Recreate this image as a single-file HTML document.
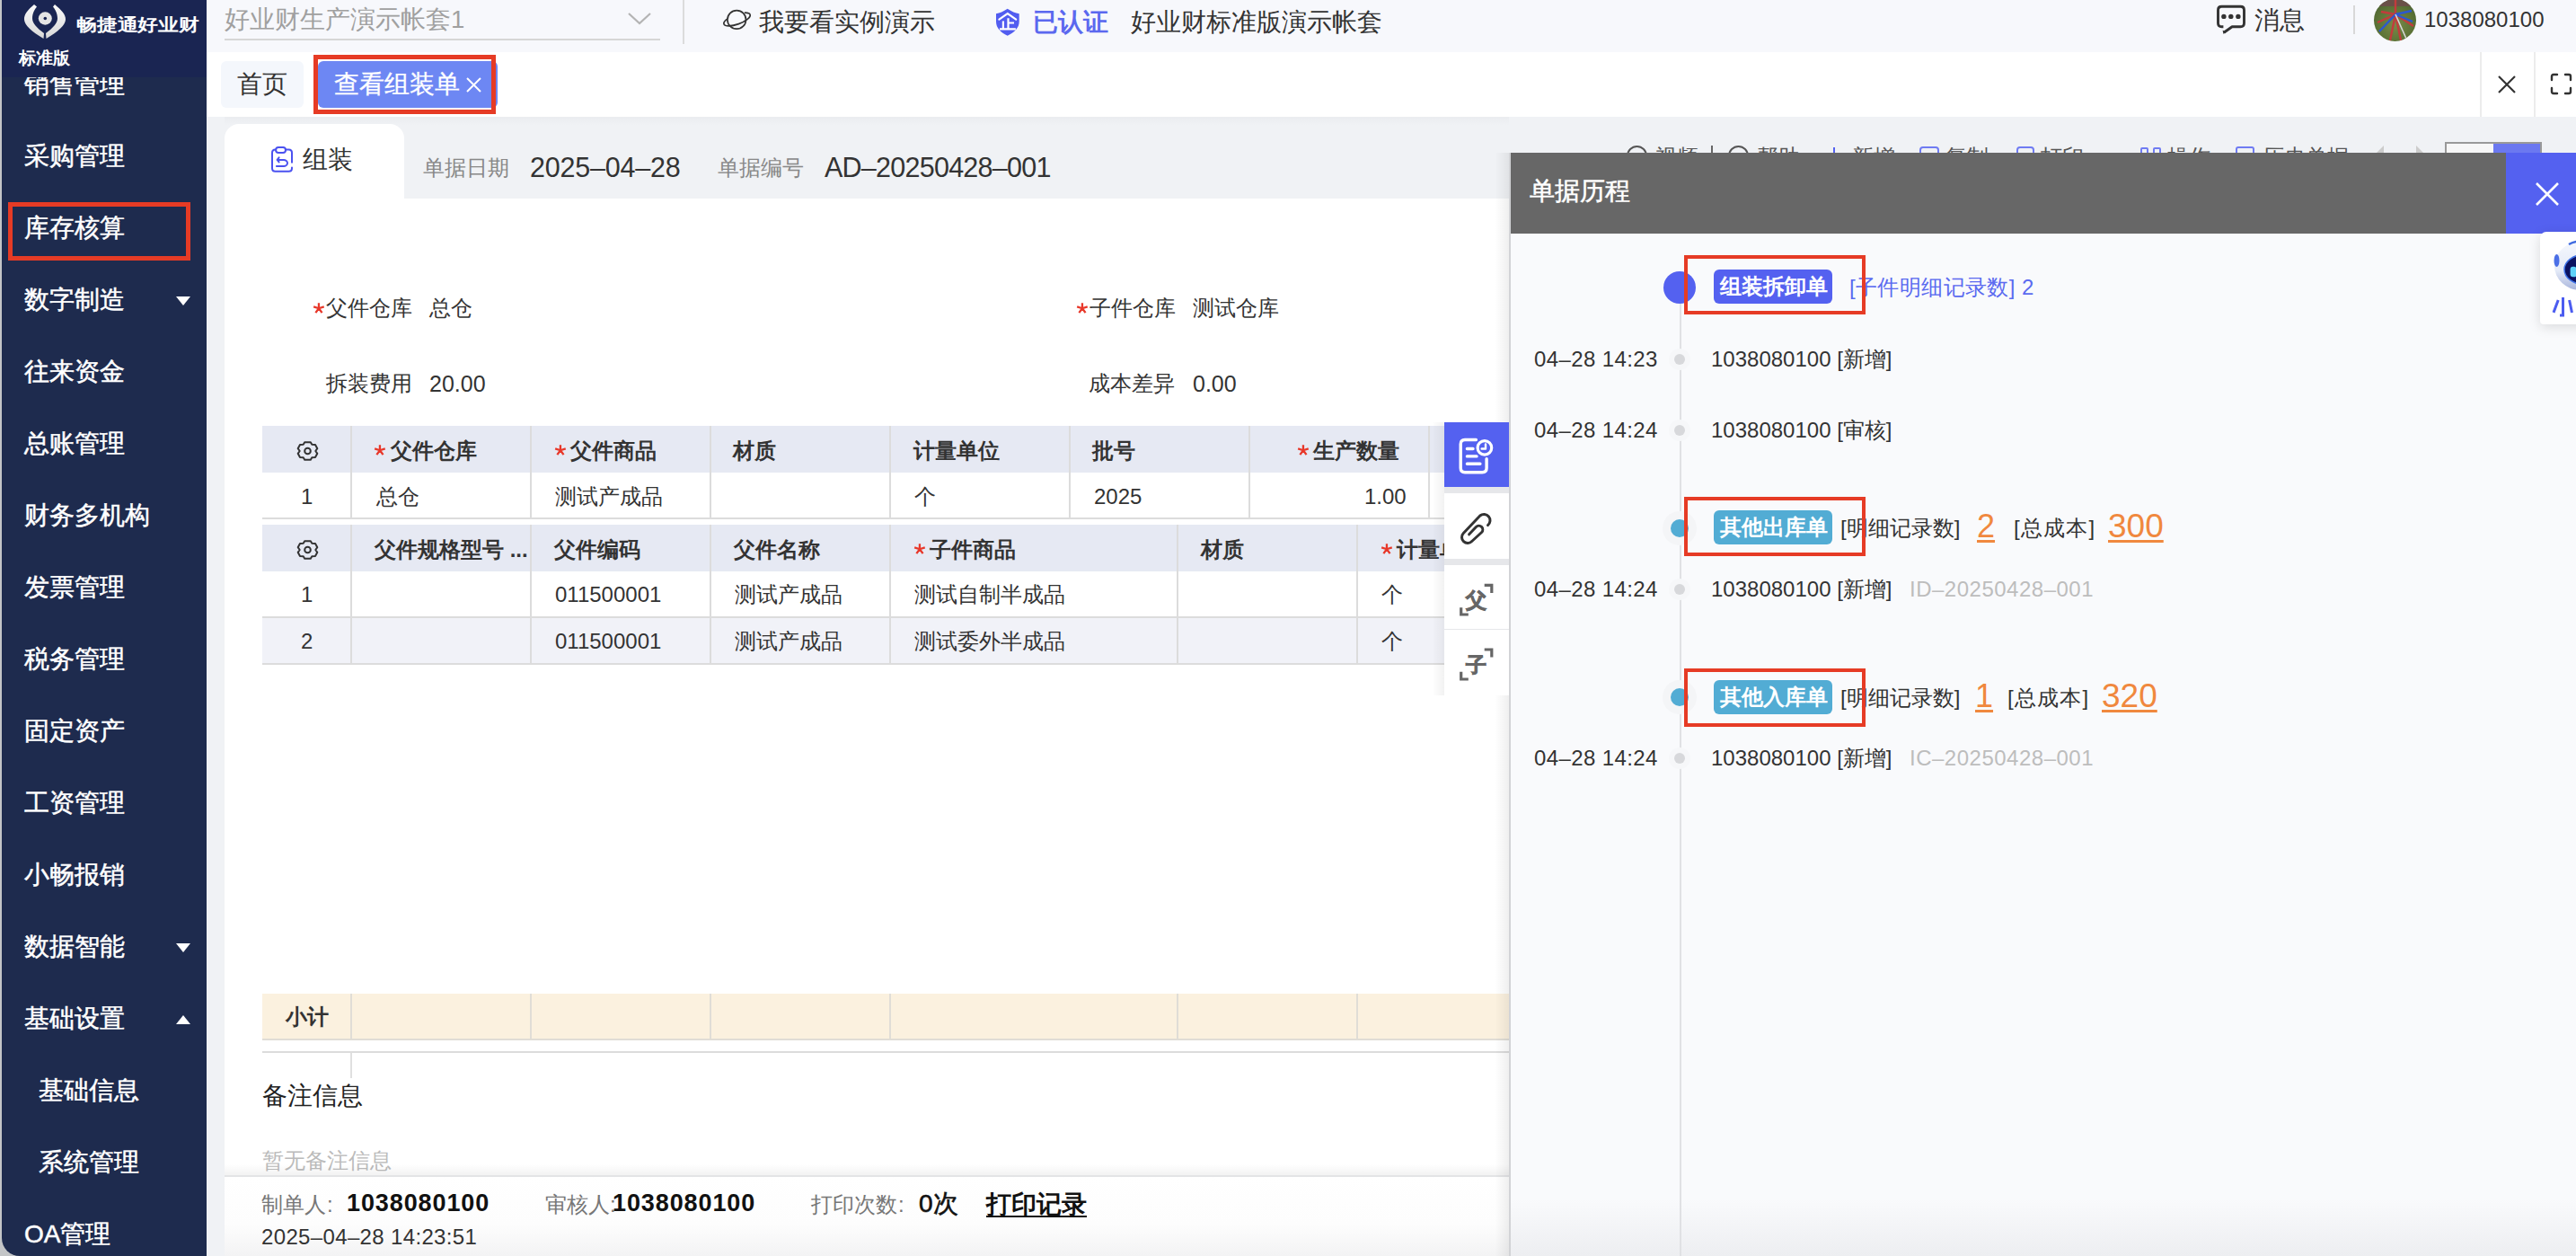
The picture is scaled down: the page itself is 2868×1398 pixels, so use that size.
<!DOCTYPE html>
<html><head><meta charset="utf-8">
<style>
*{box-sizing:border-box;margin:0;padding:0}
html,body{width:2868px;height:1398px;overflow:hidden;background:#f0f2f5}
body{font-family:"Liberation Sans",sans-serif;color:#333;position:relative}
.a{position:absolute;white-space:nowrap}
.t28{font-size:28px;line-height:40px}
.t24{font-size:24px;line-height:34px}
.si{position:absolute;color:#fff;font-size:28px;line-height:40px;left:27px;white-space:nowrap;-webkit-text-stroke:0.5px #fff}
.tri{width:0;height:0;border-left:8px solid transparent;border-right:8px solid transparent}
.dn{border-top:10px solid #fff}
.up{border-bottom:10px solid #fff}
</style></head>
<body>
<div class="a" style="left:0px;top:0px;width:2px;height:1398px;background:#c3c5c7"></div>
<div class="a" style="left:0px;top:1360px;width:30px;height:38px;background:#c3c5c7"></div>
<div class="a" style="left:2px;top:0px;width:228px;height:1398px;background:#1e2b4e;border-bottom-left-radius:20px"></div>
<div class="a si" style="top:74px">销售管理</div>
<div class="a" style="left:2px;top:0px;width:228px;height:86px;background:#1a2552"></div>
<svg class="a" style="left:0px;top:0px" width="80" height="50" viewBox="0 0 80 50"><defs><linearGradient id="lg" x1="0" y1="0" x2="0" y2="1"><stop offset="0" stop-color="#fafafa"/><stop offset="1" stop-color="#d8d8d8"/></linearGradient></defs>
<path d="M38 5 C31 11 26.5 16 27 22 C27.5 28 35 35 48.5 43 L49 37 C41 31 36 26 36 20.5 C36 15 38.5 10.5 41 7.5 Z" fill="url(#lg)"/>
<path d="M61 5 C68 11 73.5 16 73 22 C72.5 28 65 35 51.5 43 L51 37 C59 31 64 26 64 20.5 C64 15 61.5 10.5 59 7.5 Z" fill="url(#lg)"/>
<ellipse cx="50.3" cy="20.5" rx="7.5" ry="7.2" fill="#e4e4e4"/>
<circle cx="50.3" cy="20.5" r="1.8" fill="#1a2552"/></svg>
<div class="a" style="left:85px;top:14px;font-size:19px;line-height:28px;color:#fff;font-weight:bold;transform:scaleX(1.2);transform-origin:0 0">畅捷通好业财</div>
<div class="a" style="left:21px;top:51px;font-size:19px;line-height:28px;color:#fff;font-weight:bold">标准版</div>
<div class="a si" style="top:154px;left:27px">采购管理</div>
<div class="a si" style="top:234px;left:27px">库存核算</div>
<div class="a si" style="top:314px;left:27px">数字制造</div>
<div class="a si" style="top:394px;left:27px">往来资金</div>
<div class="a si" style="top:474px;left:27px">总账管理</div>
<div class="a si" style="top:554px;left:27px">财务多机构</div>
<div class="a si" style="top:634px;left:27px">发票管理</div>
<div class="a si" style="top:714px;left:27px">税务管理</div>
<div class="a si" style="top:794px;left:27px">固定资产</div>
<div class="a si" style="top:874px;left:27px">工资管理</div>
<div class="a si" style="top:954px;left:27px">小畅报销</div>
<div class="a si" style="top:1034px;left:27px">数据智能</div>
<div class="a si" style="top:1114px;left:27px">基础设置</div>
<div class="a si" style="top:1194px;left:43px">基础信息</div>
<div class="a si" style="top:1274px;left:43px">系统管理</div>
<div class="a si" style="top:1354px;left:27px">OA管理</div>
<div class="a" style="left:9px;top:225px;width:203px;height:65px;border:5px solid #e63b25"></div>
<div class="a tri dn" style="left:196px;top:330px"></div>
<div class="a tri dn" style="left:196px;top:1050px"></div>
<div class="a tri up" style="left:196px;top:1130px"></div>
<div class="a" style="left:230px;top:0px;width:2638px;height:58px;background:#f7f8fc"></div>
<div class="a" style="left:250px;top:2px;font-size:27.5px;line-height:40px;color:#a0a0a0">好业财生产演示帐套1</div>
<svg class="a" style="left:698px;top:13px" width="28" height="16" viewBox="0 0 28 16"><path d="M2 2 L14 13 L26 2" fill="none" stroke="#b4b4b4" stroke-width="2.2"/></svg>
<div class="a" style="left:250px;top:43px;width:485px;height:2px;background:#d6d6d6"></div>
<div class="a" style="left:760px;top:0px;width:2px;height:49px;background:#dcdcdc"></div>
<svg class="a" style="left:795px;top:5px" width="50" height="40" viewBox="0 0 50 40"><circle cx="25.2" cy="16.9" r="10.3" fill="none" stroke="#333" stroke-width="1.7"/>
<path d="M34.5 9.1 A15.5 5.5 -20 1 1 13.9 16.6" fill="none" stroke="#333" stroke-width="1.7" stroke-linecap="round"/></svg>
<div class="a t28" style="left:845px;top:5px">我要看实例演示</div>
<svg class="a" style="left:1100px;top:5px" width="45" height="40" viewBox="0 0 45 40"><path d="M21.7 4.8 C17 8 13 9.6 9 10.2 L9 19 C9 26 14 31 21.7 34.7 C29.4 31 34.7 26 34.7 19 L34.7 10.2 C30.4 9.6 26.4 8 21.7 4.8 Z" fill="#525df0"/>
<path d="M12.4 16.6 L21.8 10.2 L31.2 16.6" fill="none" stroke="#fff" stroke-width="2.2" stroke-linecap="round"/>
<path d="M16.9 18.5 L16.9 27.4 M22.5 15.3 L22.5 27.4 M22.5 20.5 L29 20.5 M13 27.4 L30.9 27.4" fill="none" stroke="#fff" stroke-width="2.2"/></svg>
<div class="a t28" style="left:1150px;top:5px;color:#5b68ef;font-weight:bold">已认证</div>
<div class="a t28" style="left:1259px;top:5px">好业财标准版演示帐套</div>
<svg class="a" style="left:2460px;top:0px" width="45" height="45" viewBox="0 0 45 45"><path d="M15.4 29.7 L13.5 29.7 C11 29.7 9.5 28.2 9.5 25.7 L9.5 11.3 C9.5 8.8 11 7.3 13.5 7.3 L34.5 7.3 C37 7.3 38.5 8.8 38.5 11.3 L38.5 25.7 C38.5 28.2 37 29.7 34.5 29.7 L25.1 29.7 L16 36.2" fill="none" stroke="#333" stroke-width="2.9" stroke-linejoin="round"/>
<path d="M14.6 33.8 L15.4 37.8 L19 35.6 Z" fill="#333"/>
<circle cx="15.9" cy="18.4" r="2.7" fill="#333"/><circle cx="23.8" cy="18.4" r="2.7" fill="#333"/><circle cx="31.9" cy="18.4" r="2.7" fill="#333"/></svg>
<div class="a t28" style="left:2510px;top:2.5px">消息</div>
<div class="a" style="left:2620px;top:6px;width:2px;height:32px;background:#d8d8d8"></div>
<div class="a" style="left:2643px;top:-1px;width:47px;height:47px;border-radius:50%;background:radial-gradient(circle at 50% 60%,#7a8a48,#5b7236 55%,#3f5530);overflow:hidden">
 <svg width="47" height="47" viewBox="0 0 47 47">
  <rect x="0" y="0" width="47" height="8" fill="#6a5048"/>
  <path d="M24 17 L4 26 M24 17 L18 46 M24 17 L30 46 M24 17 L44 30 M24 17 L8 14 M24 17 L24 0" stroke="#c23c3c" stroke-width="2.4"/>
  <path d="M24 17 L6 36 M24 17 L43 25 M24 17 L42 13" stroke="#2c58d0" stroke-width="2.4"/>
  <path d="M24 17 L36 44" stroke="#d8d8d8" stroke-width="1.6"/>
 </svg>
</div>
<div class="a" style="left:2699px;top:4.5px;font-size:24px;line-height:34px;color:#333">1038080100</div>
<div class="a" style="left:230px;top:58px;width:2638px;height:72px;background:#fff"></div>
<div class="a" style="left:246px;top:68px;width:92px;height:52px;background:#f4f7fc;border-radius:6px"></div>
<div class="a" style="left:264px;top:74px;font-size:28px;line-height:40px;color:#333">首页</div>
<div class="a" style="left:354px;top:68px;width:200px;height:52px;background:#6d87f3;border-radius:6px"></div>
<div class="a" style="left:372px;top:74px;font-size:28px;line-height:40px;color:#fff;-webkit-text-stroke:0.3px #fff">查看组装单</div>
<svg class="a" style="left:518px;top:85px" width="19" height="19" viewBox="0 0 19 19"><path d="M2 2 L17 17 M17 2 L2 17" stroke="#fff" stroke-width="2"/></svg>
<div class="a" style="left:349px;top:61px;width:203px;height:66px;border:5px solid #e63b25"></div>
<div class="a" style="left:2761px;top:58px;width:2px;height:72px;background:#ececec"></div>
<div class="a" style="left:2821px;top:58px;width:2px;height:72px;background:#ececec"></div>
<svg class="a" style="left:2780px;top:83px" width="22" height="22" viewBox="0 0 22 22"><path d="M2 2 L20 20 M20 2 L2 20" stroke="#333" stroke-width="2.2"/></svg>
<svg class="a" style="left:2839px;top:81px" width="25" height="25" viewBox="0 0 25 25"><path d="M2 8 L2 4 Q2 2 4 2 L8 2 M17 2 L21 2 Q23 2 23 4 L23 8 M23 17 L23 21 Q23 23 21 23 L17 23 M8 23 L4 23 Q2 23 2 21 L2 17" fill="none" stroke="#333" stroke-width="2.4" stroke-linecap="round"/></svg>
<div class="a" style="left:250px;top:130px;width:1430px;height:10px;background:linear-gradient(to bottom,rgba(0,0,20,0.025),rgba(0,0,20,0))"></div>
<div class="a" style="left:250px;top:221px;width:1440px;height:1177px;background:#fff"></div>
<div class="a" style="left:250px;top:138px;width:200px;height:90px;background:#fff;border-radius:16px 16px 0 0"></div>
<svg class="a" style="left:301px;top:163px" width="27" height="31" viewBox="0 0 27 31"><rect x="6.1" y="1" width="10.9" height="5.9" rx="2.9" fill="none" stroke="#4b52f0" stroke-width="2"/>
<path d="M6.1 3.5 L5.5 3.5 C3.3 3.5 2 4.8 2 7 L2 24.3 C2 26.5 3.3 27.8 5.5 27.8 L20.5 27.8 C22.7 27.8 24 26.5 24 24.3 L24 23.5 M24 17.8 L24 7 C24 4.8 22.7 3.5 20.5 3.5 L17 3.5" fill="none" stroke="#4b52f0" stroke-width="2" stroke-linecap="round"/>
<path d="M9.6 12.4 L7.6 14.9 L9.6 17.4 M7.6 14.9 L14.8 14.9 C17 14.9 19 16.5 19 18.4 C19 20.3 17 21.9 14.8 21.9 L6.9 21.9" fill="none" stroke="#4b52f0" stroke-width="2" stroke-linecap="round" stroke-linejoin="round"/></svg>
<div class="a t28" style="left:337px;top:158px">组装</div>
<div class="a t24" style="left:471px;top:170px;color:#888">单据日期</div>
<div class="a" style="left:590px;top:166px;font-size:30.5px;line-height:40px;color:#333;letter-spacing:-0.2px">2025–04–28</div>
<div class="a t24" style="left:799px;top:170px;color:#888">单据编号</div>
<div class="a" style="left:918px;top:166px;font-size:30.5px;line-height:40px;color:#333;letter-spacing:-0.75px">AD–20250428–001</div>
<svg class="a" style="left:348px;top:336px" width="13.9" height="13.3"><path d="M6.95 7.25 L6.95 1.15 M6.95 7.25 L12.75 5.37 M6.95 7.25 L1.15 5.37 M6.95 7.25 L10.54 12.18 M6.95 7.25 L3.36 12.18" stroke="#e8382a" stroke-width="2.3" stroke-linecap="butt"/></svg>
<div class="a t24" style="left:363px;top:326px">父件仓库</div>
<div class="a t24" style="left:478px;top:326px">总仓</div>
<svg class="a" style="left:1198px;top:336px" width="13.9" height="13.3"><path d="M6.95 7.25 L6.95 1.15 M6.95 7.25 L12.75 5.37 M6.95 7.25 L1.15 5.37 M6.95 7.25 L10.54 12.18 M6.95 7.25 L3.36 12.18" stroke="#e8382a" stroke-width="2.3" stroke-linecap="butt"/></svg>
<div class="a t24" style="left:1213px;top:326px">子件仓库</div>
<div class="a t24" style="left:1328px;top:326px">测试仓库</div>
<div class="a t24" style="left:363px;top:410px">拆装费用</div>
<div class="a" style="left:478px;top:410px;font-size:25px;line-height:34px">20.00</div>
<div class="a t24" style="left:1212px;top:410px">成本差异</div>
<div class="a" style="left:1328px;top:410px;font-size:25px;line-height:34px">0.00</div>
<div class="a" style="left:292px;top:474px;width:1408px;height:52px;background:#e6e9f3"></div>
<div class="a" style="left:292px;top:576px;width:1408px;height:2px;background:#dcdcdc"></div>
<div class="a" style="left:390px;top:474px;width:2px;height:104px;background:#dcdcdc"></div>
<div class="a" style="left:590px;top:474px;width:2px;height:104px;background:#dcdcdc"></div>
<div class="a" style="left:790px;top:474px;width:2px;height:104px;background:#dcdcdc"></div>
<div class="a" style="left:990px;top:474px;width:2px;height:104px;background:#dcdcdc"></div>
<div class="a" style="left:1190px;top:474px;width:2px;height:104px;background:#dcdcdc"></div>
<div class="a" style="left:1390px;top:474px;width:2px;height:104px;background:#dcdcdc"></div>
<div class="a" style="left:1590px;top:474px;width:2px;height:104px;background:#dcdcdc"></div>
<div class="a" style="left:292px;top:584px;width:1408px;height:52px;background:#e6e9f3"></div>
<div class="a" style="left:292px;top:687px;width:1408px;height:52px;background:#f1f2f8"></div>
<div class="a" style="left:292px;top:686px;width:1408px;height:2px;background:#dcdcdc"></div>
<div class="a" style="left:292px;top:738px;width:1408px;height:2px;background:#dcdcdc"></div>
<div class="a" style="left:390px;top:584px;width:2px;height:156px;background:#dcdcdc"></div>
<div class="a" style="left:590px;top:584px;width:2px;height:156px;background:#dcdcdc"></div>
<div class="a" style="left:790px;top:584px;width:2px;height:156px;background:#dcdcdc"></div>
<div class="a" style="left:990px;top:584px;width:2px;height:156px;background:#dcdcdc"></div>
<div class="a" style="left:1310px;top:584px;width:2px;height:156px;background:#dcdcdc"></div>
<div class="a" style="left:1510px;top:584px;width:2px;height:156px;background:#dcdcdc"></div>
<svg class="a" style="left:330px;top:490px" width="25" height="24" viewBox="0 0 25 24"><path d="M9.2 2.2 L15.8 2.2 L17.3 4.8 L21 5 L23.3 9.2 L21.3 12 L23.3 14.8 L21 19 L17.3 19.2 L15.8 21.8 L9.2 21.8 L7.7 19.2 L4 19 L1.7 14.8 L3.7 12 L1.7 9.2 L4 5 L7.7 4.8 Z" fill="none" stroke="#333" stroke-width="2" stroke-linejoin="round"/><circle cx="12.5" cy="12" r="3.3" fill="none" stroke="#333" stroke-width="2"/></svg>
<svg class="a" style="left:330px;top:600px" width="25" height="24" viewBox="0 0 25 24"><path d="M9.2 2.2 L15.8 2.2 L17.3 4.8 L21 5 L23.3 9.2 L21.3 12 L23.3 14.8 L21 19 L17.3 19.2 L15.8 21.8 L9.2 21.8 L7.7 19.2 L4 19 L1.7 14.8 L3.7 12 L1.7 9.2 L4 5 L7.7 4.8 Z" fill="none" stroke="#333" stroke-width="2" stroke-linejoin="round"/><circle cx="12.5" cy="12" r="3.3" fill="none" stroke="#333" stroke-width="2"/></svg>
<svg class="a" style="left:416px;top:494px" width="13.9" height="13.3"><path d="M6.95 7.25 L6.95 1.15 M6.95 7.25 L12.75 5.37 M6.95 7.25 L1.15 5.37 M6.95 7.25 L10.54 12.18 M6.95 7.25 L3.36 12.18" stroke="#e8382a" stroke-width="2.3" stroke-linecap="butt"/></svg>
<div class="a" style="left:435px;top:484.5px;font-size:24px;line-height:34px;color:#333;font-weight:bold;">父件仓库</div>
<svg class="a" style="left:617px;top:494px" width="13.9" height="13.3"><path d="M6.95 7.25 L6.95 1.15 M6.95 7.25 L12.75 5.37 M6.95 7.25 L1.15 5.37 M6.95 7.25 L10.54 12.18 M6.95 7.25 L3.36 12.18" stroke="#e8382a" stroke-width="2.3" stroke-linecap="butt"/></svg>
<div class="a" style="left:635px;top:484.5px;font-size:24px;line-height:34px;color:#333;font-weight:bold;">父件商品</div>
<div class="a" style="left:816px;top:484.5px;font-size:24px;line-height:34px;color:#333;font-weight:bold;">材质</div>
<div class="a" style="left:1017px;top:484.5px;font-size:24px;line-height:34px;color:#333;font-weight:bold;">计量单位</div>
<div class="a" style="left:1216px;top:484.5px;font-size:24px;line-height:34px;color:#333;font-weight:bold;">批号</div>
<svg class="a" style="left:1444px;top:494px" width="13.9" height="13.3"><path d="M6.95 7.25 L6.95 1.15 M6.95 7.25 L12.75 5.37 M6.95 7.25 L1.15 5.37 M6.95 7.25 L10.54 12.18 M6.95 7.25 L3.36 12.18" stroke="#e8382a" stroke-width="2.3" stroke-linecap="butt"/></svg>
<div class="a" style="left:1462px;top:484.5px;font-size:24px;line-height:34px;color:#333;font-weight:bold;">生产数量</div>
<div class="a" style="left:335px;top:536.0px;font-size:24px;line-height:34px;color:#333;">1</div>
<div class="a" style="left:419px;top:536.0px;font-size:24px;line-height:34px;color:#333;">总仓</div>
<div class="a" style="left:618px;top:536.0px;font-size:24px;line-height:34px;color:#333;">测试产成品</div>
<div class="a" style="left:1018px;top:536.0px;font-size:24px;line-height:34px;color:#333;">个</div>
<div class="a" style="left:1218px;top:536.0px;font-size:24px;line-height:34px;color:#333;">2025</div>
<div class="a" style="left:1519px;top:536.0px;font-size:24px;line-height:34px;color:#333;">1.00</div>
<div class="a" style="left:417px;top:594.5px;font-size:24px;line-height:34px;color:#333;font-weight:bold;">父件规格型号 ...</div>
<div class="a" style="left:617px;top:594.5px;font-size:24px;line-height:34px;color:#333;font-weight:bold;">父件编码</div>
<div class="a" style="left:817px;top:594.5px;font-size:24px;line-height:34px;color:#333;font-weight:bold;">父件名称</div>
<svg class="a" style="left:1017px;top:604px" width="13.9" height="13.3"><path d="M6.95 7.25 L6.95 1.15 M6.95 7.25 L12.75 5.37 M6.95 7.25 L1.15 5.37 M6.95 7.25 L10.54 12.18 M6.95 7.25 L3.36 12.18" stroke="#e8382a" stroke-width="2.3" stroke-linecap="butt"/></svg>
<div class="a" style="left:1035px;top:594.5px;font-size:24px;line-height:34px;color:#333;font-weight:bold;">子件商品</div>
<div class="a" style="left:1337px;top:594.5px;font-size:24px;line-height:34px;color:#333;font-weight:bold;">材质</div>
<svg class="a" style="left:1537px;top:604px" width="13.9" height="13.3"><path d="M6.95 7.25 L6.95 1.15 M6.95 7.25 L12.75 5.37 M6.95 7.25 L1.15 5.37 M6.95 7.25 L10.54 12.18 M6.95 7.25 L3.36 12.18" stroke="#e8382a" stroke-width="2.3" stroke-linecap="butt"/></svg>
<div class="a" style="left:1555px;top:594.5px;font-size:24px;line-height:34px;color:#333;font-weight:bold;">计量单位</div>
<div class="a" style="left:335px;top:645.0px;font-size:24px;line-height:34px;color:#333;">1</div>
<div class="a" style="left:618px;top:645.0px;font-size:24px;line-height:34px;color:#333;">011500001</div>
<div class="a" style="left:818px;top:645.0px;font-size:24px;line-height:34px;color:#333;">测试产成品</div>
<div class="a" style="left:1018px;top:645.0px;font-size:24px;line-height:34px;color:#333;">测试自制半成品</div>
<div class="a" style="left:1538px;top:645.0px;font-size:24px;line-height:34px;color:#333;">个</div>
<div class="a" style="left:335px;top:697.0px;font-size:24px;line-height:34px;color:#333;">2</div>
<div class="a" style="left:618px;top:697.0px;font-size:24px;line-height:34px;color:#333;">011500001</div>
<div class="a" style="left:818px;top:697.0px;font-size:24px;line-height:34px;color:#333;">测试产成品</div>
<div class="a" style="left:1018px;top:697.0px;font-size:24px;line-height:34px;color:#333;">测试委外半成品</div>
<div class="a" style="left:1538px;top:697.0px;font-size:24px;line-height:34px;color:#333;">个</div>
<div class="a" style="left:292px;top:1106px;width:1408px;height:51px;background:#fbf1df"></div>
<div class="a" style="left:292px;top:1156px;width:1408px;height:2px;background:#e0ddd6"></div>
<div class="a" style="left:390px;top:1106px;width:2px;height:51px;background:#e0ddd6"></div>
<div class="a" style="left:590px;top:1106px;width:2px;height:51px;background:#e0ddd6"></div>
<div class="a" style="left:790px;top:1106px;width:2px;height:51px;background:#e0ddd6"></div>
<div class="a" style="left:990px;top:1106px;width:2px;height:51px;background:#e0ddd6"></div>
<div class="a" style="left:1310px;top:1106px;width:2px;height:51px;background:#e0ddd6"></div>
<div class="a" style="left:1510px;top:1106px;width:2px;height:51px;background:#e0ddd6"></div>
<div class="a" style="left:318px;top:1114.5px;font-size:24px;line-height:34px;color:#333;font-weight:bold;">小计</div>
<div class="a" style="left:292px;top:1170px;width:1408px;height:2px;background:#dcdcdc"></div>
<div class="a" style="left:390px;top:1172px;width:2px;height:28px;background:#e0e0e0"></div>
<div class="a" style="left:292px;top:1200px;font-size:28px;line-height:40px;color:#222">备注信息</div>
<div class="a" style="left:292px;top:1275.0px;font-size:24px;line-height:34px;color:#bbb;">暂无备注信息</div>
<div class="a" style="left:250px;top:1296px;width:1440px;height:14px;background:linear-gradient(to bottom,rgba(0,0,0,0),rgba(0,0,0,0.06))"></div>
<div class="a" style="left:250px;top:1308px;width:1440px;height:90px;background:linear-gradient(to bottom,#fff 0%,#fdfdfd 60%,#f3f3f4 100%);border-top:2px solid #e3e4e6"></div>
<div class="a" style="left:291px;top:1324.0px;font-size:24px;line-height:34px;color:#777;">制单人<span style="margin-left:1px">:</span></div>
<div class="a" style="left:386px;top:1322.0px;font-size:27px;line-height:34px;color:#111;font-weight:bold;letter-spacing:0.9px">1038080100</div>
<div class="a" style="left:607px;top:1324.0px;font-size:24px;line-height:34px;color:#777;">审核人:</div>
<div class="a" style="left:682px;top:1322.0px;font-size:27px;line-height:34px;color:#111;font-weight:bold;letter-spacing:0.9px">1038080100</div>
<div class="a" style="left:903px;top:1324.0px;font-size:24px;line-height:34px;color:#777;">打印次数<span style="margin-left:1px">:</span></div>
<div class="a" style="left:1023px;top:1323.0px;font-size:28px;line-height:34px;color:#111;-webkit-text-stroke:0.6px #111">0次</div>
<div class="a" style="left:1098px;top:1324.0px;font-size:28px;line-height:34px;color:#111;font-weight:bold;text-decoration:underline;text-underline-offset:3px;">打印记录</div>
<div class="a" style="left:291px;top:1360.0px;font-size:24px;line-height:34px;color:#333;letter-spacing:0.35px">2025–04–28 14:23:51</div>
<div class="a" style="left:1811px;top:162px;width:23px;height:23px;border-radius:50%;border:2px solid #555"></div>
<div class="a" style="left:1843px;top:158.0px;font-size:24px;line-height:34px;color:#555;">视频</div>
<div class="a" style="left:1905px;top:162px;width:2px;height:22px;background:#666"></div>
<div class="a" style="left:1924px;top:162px;width:23px;height:23px;border-radius:50%;border:2px solid #555"></div>
<div class="a" style="left:1956px;top:158.0px;font-size:24px;line-height:34px;color:#555;">帮助</div>
<div class="a" style="left:2041px;top:164px;width:2px;height:18px;background:#5461f0"></div>
<div class="a" style="left:2062px;top:158.0px;font-size:24px;line-height:34px;color:#555;">新增</div>
<div class="a" style="left:2137px;top:163px;width:22px;height:22px;border:2px solid #6f7bf2;border-radius:4px"></div>
<div class="a" style="left:2166px;top:158.0px;font-size:24px;line-height:34px;color:#555;">复制</div>
<div class="a" style="left:2245px;top:163px;width:20px;height:22px;border:2px solid #6f7bf2;border-radius:4px"></div>
<div class="a" style="left:2272px;top:158.0px;font-size:24px;line-height:34px;color:#555;">打印</div>
<div class="a" style="left:2383px;top:164px;width:9px;height:9px;border:2px solid #6f7bf2;border-radius:2px"></div>
<div class="a" style="left:2397px;top:164px;width:9px;height:9px;border:2px solid #6f7bf2;border-radius:2px"></div>
<div class="a" style="left:2413px;top:158.0px;font-size:24px;line-height:34px;color:#555;">操作</div>
<div class="a" style="left:2489px;top:163px;width:21px;height:22px;border:2px solid #6f7bf2;border-radius:3px"></div>
<div class="a" style="left:2519px;top:158.0px;font-size:24px;line-height:34px;color:#555;">历史单据</div>
<div class="a" style="left:2646px;top:162px;width:0;height:0;border-top:8px solid transparent;border-bottom:8px solid transparent;border-right:8px solid #ccc"></div>
<div class="a" style="left:2690px;top:162px;width:0;height:0;border-top:8px solid transparent;border-bottom:8px solid transparent;border-left:8px solid #ccc"></div>
<div class="a" style="left:2722px;top:158px;width:108px;height:40px;border:2px solid #999;background:linear-gradient(to right,#f7f7f7 50%,#6b78f0 50%)"></div>
<div class="a" style="left:1664px;top:170px;width:18px;height:1228px;background:linear-gradient(to right,rgba(0,0,0,0),rgba(0,0,0,0.07))"></div>
<div class="a" style="left:1680px;top:170px;width:1188px;height:1228px;background:#f9fafc;border-left:2px solid #d2d3d6"></div>
<div class="a" style="left:1682px;top:170px;width:1108px;height:90px;background:#676767"></div>
<div class="a" style="left:2790px;top:170px;width:78px;height:90px;background:#5461f0"></div>
<svg class="a" style="left:2822px;top:202px" width="28" height="28" viewBox="0 0 28 28"><path d="M2 2 L26 26 M26 2 L2 26" stroke="#fff" stroke-width="2.6"/></svg>
<div class="a" style="left:1703px;top:193.0px;font-size:28px;line-height:40px;color:#fff;-webkit-text-stroke:0.5px #fff">单据历程</div>
<div class="a" style="left:2828px;top:258px;width:60px;height:103px;background:#fff;border-radius:7px 0 0 4px;box-shadow:0 3px 14px rgba(0,0,0,0.13)"></div>
<svg class="a" style="left:2810px;top:250px" width="58" height="120" viewBox="0 0 58 120"><defs><linearGradient id="hd" x1="0" y1="0" x2="0" y2="1"><stop offset="0" stop-color="#f4f7fd"/><stop offset="0.6" stop-color="#e4eaf7"/><stop offset="1" stop-color="#a8b5dc"/></linearGradient></defs>
<ellipse cx="63" cy="46" rx="29" ry="27" fill="url(#hd)"/>
<path d="M50 22 C55 19 60 18 66 19" fill="none" stroke="#3f6be0" stroke-width="2.5"/>
<ellipse cx="36.5" cy="40" rx="3" ry="7" fill="#4b6fe6"/>
<ellipse cx="67" cy="50" rx="22" ry="16.5" fill="#0b1260" stroke="#3f73e8" stroke-width="1.5"/>
<rect x="51.6" y="46.8" width="7" height="11.5" rx="3" fill="#5fd2f8"/>
<path d="M38.2 84 L33 97.9 M43.5 81 L43.5 101 L40 101 M50.6 84 L53.5 98" fill="none" stroke="#4b5cf0" stroke-width="3"/></svg>
<div class="a" style="left:1682px;top:1335px;width:1186px;height:63px;background:linear-gradient(to bottom,rgba(236,237,241,0),#edeef1)"></div>
<div class="a" style="left:1870px;top:330px;width:2px;height:1068px;background:#e0e1e4"></div>
<div class="a" style="left:1852px;top:302px;width:36px;height:36px;border-radius:50%;background:#5461f0"></div>
<div class="a" style="left:1858px;top:388px;width:24px;height:24px;border-radius:50%;background:#f6f7f9"></div>
<div class="a" style="left:1864px;top:394px;width:12px;height:12px;border-radius:50%;background:#d7d8db"></div>
<div class="a" style="left:1858px;top:467px;width:24px;height:24px;border-radius:50%;background:#f6f7f9"></div>
<div class="a" style="left:1864px;top:473px;width:12px;height:12px;border-radius:50%;background:#d7d8db"></div>
<div class="a" style="left:1858px;top:644px;width:24px;height:24px;border-radius:50%;background:#f6f7f9"></div>
<div class="a" style="left:1864px;top:650px;width:12px;height:12px;border-radius:50%;background:#d7d8db"></div>
<div class="a" style="left:1858px;top:832px;width:24px;height:24px;border-radius:50%;background:#f6f7f9"></div>
<div class="a" style="left:1864px;top:838px;width:12px;height:12px;border-radius:50%;background:#d7d8db"></div>
<div class="a" style="left:1851px;top:568.5px;width:38px;height:38px;border-radius:50%;background:#f4f5f7"></div>
<div class="a" style="left:1860px;top:577.5px;width:20px;height:20px;border-radius:50%;background:#52acd4"></div>
<div class="a" style="left:1851px;top:757px;width:38px;height:38px;border-radius:50%;background:#f4f5f7"></div>
<div class="a" style="left:1860px;top:766px;width:20px;height:20px;border-radius:50%;background:#52acd4"></div>
<div class="a" style="left:1908px;top:300px;width:132px;height:38px;background:#5461f0;border-radius:6px"></div>
<div class="a" style="left:1915px;top:302.0px;font-size:24px;line-height:34px;color:#fff;font-weight:bold;">组装拆卸单</div>
<div class="a" style="left:2059px;top:303.0px;font-size:24px;line-height:34px;color:#5b6af0;letter-spacing:0.4px">[子件明细记录数] 2</div>
<div class="a" style="left:1708px;top:383.0px;font-size:24px;line-height:34px;color:#333;letter-spacing:0.4px">04–28 14:23</div>
<div class="a" style="left:1905px;top:383.0px;font-size:24px;line-height:34px;color:#333;">1038080100 [新增]</div>
<div class="a" style="left:1708px;top:462.0px;font-size:24px;line-height:34px;color:#333;letter-spacing:0.4px">04–28 14:24</div>
<div class="a" style="left:1905px;top:462.0px;font-size:24px;line-height:34px;color:#333;">1038080100 [审核]</div>
<div class="a" style="left:1908px;top:568px;width:132px;height:38px;background:#52acd4;border-radius:6px"></div>
<div class="a" style="left:1915px;top:570.0px;font-size:24px;line-height:34px;color:#fff;font-weight:bold;">其他出库单</div>
<div class="a" style="left:2049px;top:571.0px;font-size:24px;line-height:34px;color:#333;">[明细记录数]</div>
<div class="a" style="left:2201px;top:564.0px;font-size:36px;line-height:44px;color:#f0883e;text-decoration:underline;text-underline-offset:3px;">2</div>
<div class="a" style="left:2242px;top:571.0px;font-size:24px;line-height:34px;color:#333;letter-spacing:1.2px">[总成本]</div>
<div class="a" style="left:2347px;top:564.0px;font-size:37px;line-height:44px;color:#f0883e;text-decoration:underline;text-underline-offset:3px;">300</div>
<div class="a" style="left:1708px;top:639.0px;font-size:24px;line-height:34px;color:#333;letter-spacing:0.4px">04–28 14:24</div>
<div class="a" style="left:1905px;top:639.0px;font-size:24px;line-height:34px;color:#333;">1038080100 [新增]</div>
<div class="a" style="left:2126px;top:639.0px;font-size:24px;line-height:34px;color:#bdbdbd;letter-spacing:0.5px">ID–20250428–001</div>
<div class="a" style="left:1908px;top:757px;width:132px;height:38px;background:#52acd4;border-radius:6px"></div>
<div class="a" style="left:1915px;top:759.0px;font-size:24px;line-height:34px;color:#fff;font-weight:bold;">其他入库单</div>
<div class="a" style="left:2049px;top:760.0px;font-size:24px;line-height:34px;color:#333;">[明细记录数]</div>
<div class="a" style="left:2199px;top:753.0px;font-size:36px;line-height:44px;color:#f0883e;text-decoration:underline;text-underline-offset:3px;">1</div>
<div class="a" style="left:2235px;top:760.0px;font-size:24px;line-height:34px;color:#333;letter-spacing:1.2px">[总成本]</div>
<div class="a" style="left:2340px;top:753.0px;font-size:37px;line-height:44px;color:#f0883e;text-decoration:underline;text-underline-offset:3px;">320</div>
<div class="a" style="left:1708px;top:827.0px;font-size:24px;line-height:34px;color:#333;letter-spacing:0.4px">04–28 14:24</div>
<div class="a" style="left:1905px;top:827.0px;font-size:24px;line-height:34px;color:#333;">1038080100 [新增]</div>
<div class="a" style="left:2126px;top:827.0px;font-size:24px;line-height:34px;color:#bdbdbd;letter-spacing:0.5px">IC–20250428–001</div>
<div class="a" style="left:1875px;top:284px;width:202px;height:66px;border:4.5px solid #e63b25"></div>
<div class="a" style="left:1875px;top:553px;width:202px;height:66px;border:4.5px solid #e63b25"></div>
<div class="a" style="left:1875px;top:744px;width:202px;height:65px;border:4.5px solid #e63b25"></div>
<div class="a" style="left:1594px;top:470px;width:14px;height:304px;background:linear-gradient(to right,rgba(0,0,0,0),rgba(0,0,0,0.05))"></div>
<div class="a" style="left:1608px;top:470px;width:72px;height:304px;background:#e6e7ea"></div>
<div class="a" style="left:1608px;top:470px;width:72px;height:72px;background:#5461f0"></div>
<div class="a" style="left:1608px;top:549px;width:72px;height:73px;background:#fff"></div>
<div class="a" style="left:1608px;top:629px;width:72px;height:71px;background:#fff"></div>
<div class="a" style="left:1608px;top:701px;width:72px;height:73px;background:#fff"></div>
<svg class="a" style="left:1610px;top:475px" width="70" height="70" viewBox="0 0 70 70"><path d="M33.4 14.5 L21 14.5 C18 14.5 16.2 16.3 16.2 19.3 L16.2 46 C16.2 49 18 50.7 21 50.7 L40.3 50.7 C43.3 50.7 45.1 49 45.1 46 L45.1 35.7" fill="none" stroke="#fff" stroke-width="3.4" stroke-linecap="round"/>
<path d="M23.4 24.5 L30 24.5 M23.4 32.9 L34 32.9 M23.4 41.2 L37.9 41.2" stroke="#fff" stroke-width="3.4" stroke-linecap="round"/>
<circle cx="42.9" cy="23.4" r="7.8" fill="none" stroke="#fff" stroke-width="3.2"/>
<path d="M44 19.5 L44 24.5 L39.6 24.5" fill="none" stroke="#fff" stroke-width="2.4" stroke-linecap="round" stroke-linejoin="round"/></svg>
<svg class="a" style="left:1610px;top:560px" width="60" height="60" viewBox="0 0 60 60"><path d="M46.5 24.6 A6.5 6.5 0 1 0 37.8 14 L19.3 33.5 A6.5 6.5 0 0 0 28.7 42.5 L39.6 32.5 A4.3 4.3 0 0 0 33.4 26.5 L25.6 34.8" fill="none" stroke="#333" stroke-width="3" stroke-linecap="round" stroke-linejoin="round"/></svg>
<svg class="a" style="left:1610px;top:630px" width="70" height="70" viewBox="0 0 70 70"><path d="M42.7 21.4 L50.8 21.4 L50.8 30.0 M16.7 46.2 L16.7 54.0 L24.8 54.0" fill="none" stroke="#666" stroke-width="3.2"/></svg>
<svg class="a" style="left:1610px;top:702px" width="70" height="70" viewBox="0 0 70 70"><path d="M42.7 21.0 L50.8 21.0 L50.8 29.6 M16.7 45.8 L16.7 54.0 L24.8 54.0" fill="none" stroke="#666" stroke-width="3.2"/></svg>
<div class="a" style="left:1632px;top:651px;font-size:23px;line-height:34px;color:#666;font-weight:bold;-webkit-text-stroke:0.9px #666">父</div>
<div class="a" style="left:1632px;top:723px;font-size:23px;line-height:34px;color:#666;font-weight:bold;-webkit-text-stroke:0.9px #666">子</div>
</body></html>
